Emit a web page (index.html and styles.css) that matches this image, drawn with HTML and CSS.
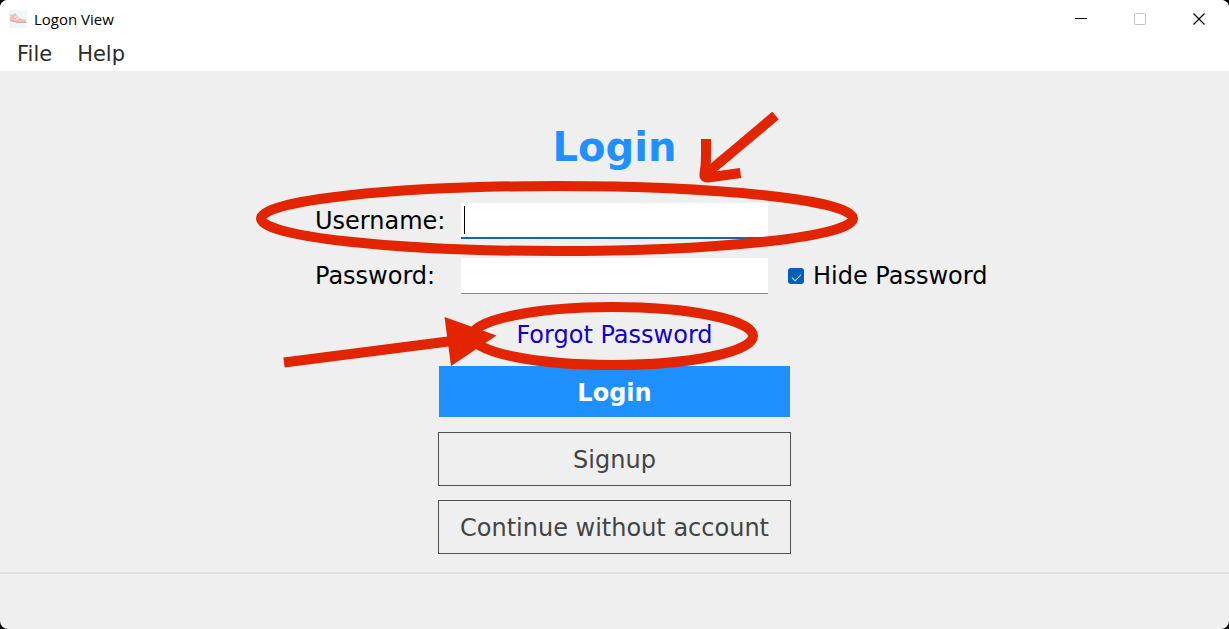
FILE: index.html
```html
<!DOCTYPE html>
<html lang="en">
<head>
<meta charset="utf-8">
<title>Logon View</title>
<link rel="stylesheet" href="styles.css">
</head>
<body>
<div class="window">
  <header class="titlebar">
    <svg class="app-icon" width="18" height="18" viewBox="0 0 18 18" aria-hidden="true">
      <rect width="18" height="18" fill="#eef8fa"/>
      <path d="M1.500 4 L3.500 5 L6 3 L9 6.500 L13 9 L17 10 V12.500 L11 13 L1 10.500Z" fill="#f0c0bb"/>
      <path d="M1 10.500 L8 12.300 L17 12.500" fill="none" stroke="#d9a09c" stroke-width="1"/>
      <path d="M5.500 7 L8 6 M7.500 9 L10.500 7.500" stroke="#fff" stroke-width=".8"/>
    </svg>
    <span class="caption">Logon View</span>
    <div class="controls">
      <button type="button" class="control" aria-label="Minimize">
        <svg width="12" height="12" viewBox="0 0 12 12"><path d="M0 5.500H12" stroke="#000"/></svg>
      </button>
      <button type="button" class="control" aria-label="Maximize" disabled>
        <svg width="12" height="12" viewBox="0 0 12 12"><rect x=".5" y=".5" width="11" height="11" rx="1" fill="none" stroke="#c4c4c4"/></svg>
      </button>
      <button type="button" class="control" aria-label="Close">
        <svg width="12" height="12" viewBox="0 0 12 12"><path d="M.5 .5L11.500 11.500M11.500 .5L.5 11.500" stroke="#000" stroke-width="1.200"/></svg>
      </button>
    </div>
  </header>
  <nav class="menubar">
    <button type="button" class="menu">File</button>
    <button type="button" class="menu">Help</button>
  </nav>
  <main class="content">
    <form class="login">
      <h1 class="title">Login</h1>
      <div class="fields">
        <label class="label" for="username">Username:</label>
        <div class="field focused"><span class="caret"></span><input class="input" id="username" type="text"></div>
        <span></span>
        <label class="label" for="password">Password:</label>
        <div class="field"><input class="input" id="password" type="password"></div>
        <label class="toggle" for="hide"><input class="check" id="hide" type="checkbox" checked>Hide Password</label>
      </div>
      <a class="forgot" href="#">Forgot Password</a>
      <div class="actions">
        <button type="submit" class="button primary">Login</button>
        <button type="button" class="button">Signup</button>
        <button type="button" class="button">Continue without account</button>
      </div>
      <svg class="marks" width="620" height="280" viewBox="250 100 620 280" fill="none" stroke="#e22400" stroke-width="10" aria-hidden="true">
        <ellipse cx="557" cy="218.500" rx="296" ry="32.500"/>
        <ellipse cx="612.500" cy="336" rx="140.500" ry="29"/>
        <path d="M775.500 115.500L706 174"/>
        <path d="M706 139V155Q706 166 704.500 174Q704 178 708 177.500L740.500 173"/>
        <path d="M284 362.500L452 341"/>
        <path d="M444.500 317L496.500 335.500L451 366Z" fill="#e22400" stroke="none"/>
      </svg>
    </form>
  </main>
  <footer class="statusbar"></footer>
</div>
</body>
</html>
```
FILE: styles.css
```css
* { box-sizing: border-box; }

body {
  margin: 0;
  background: #000;
  font-family: "DejaVu Sans", Verdana, sans-serif;
  color: #000;
}

button, input { font: inherit; color: inherit; }

.window {
  display: flex;
  flex-direction: column;
  min-height: 100vh;
  background: #efefef;
  border-radius: 8px;
  overflow: hidden;
}

.titlebar {
  display: flex;
  align-items: center;
  height: 37px;
  padding: 0 1px 0 9px;
  background: #fff;
}

.caption {
  margin-left: 7px;
  font-family: "Open Sans", "Noto Sans", sans-serif;
  font-size: 15px;
}

.controls {
  display: flex;
  height: 100%;
  margin-left: auto;
}

.control {
  display: grid;
  place-items: center;
  width: 59px;
  padding: 0;
  border: 0;
  background: none;
}

.menubar {
  display: flex;
  gap: 25px;
  height: 34px;
  padding-left: 17px;
  background: #fff;
}

.menu {
  padding: 0;
  border: 0;
  background: none;
  color: #2b2b2b;
  font-size: 21px;
}

.content {
  flex: 1;
  padding-top: 52px;
}

.login {
  position: relative;
  display: flex;
  flex-direction: column;
  align-items: center;
  font-size: 24px;
}

.title {
  margin: 0;
  color: #1e90ff;
  font-size: 40px;
  line-height: 48px;
}

.fields {
  display: grid;
  grid-template-columns: 1fr 307px 1fr;
  row-gap: 19px;
  align-items: center;
  width: 100%;
  margin-top: 32px;
}

.label {
  justify-self: end;
  width: 146px;
}

.field {
  position: relative;
  height: 36px;
  background: #fff;
  border-bottom: 1px solid #8c8c8c;
}

.focused { border-bottom: 2px solid #1466b0; }

.input {
  display: block;
  width: 100%;
  height: 100%;
  padding: 0 4px;
  border: 0;
  background: none;
  outline: none;
}

.caret {
  position: absolute;
  top: 3px;
  left: 3px;
  width: 1px;
  height: 28px;
  background: #000;
}

.toggle {
  display: flex;
  align-items: center;
  gap: 9px;
  margin-left: 20px;
  white-space: nowrap;
}

.check {
  display: grid;
  place-items: center;
  width: 16px;
  height: 16px;
  margin: 0;
  appearance: none;
  border-radius: 3px;
  background: #005fb8;
}

.check:checked::before {
  content: "";
  width: 8px;
  height: 4px;
  border: solid #cfe3f5;
  border-width: 0 0 1px 1px;
  transform: rotate(-45deg);
}

.forgot {
  margin-top: 27px;
  color: #1200d0;
  line-height: 28px;
  text-decoration: none;
}

.actions {
  display: flex;
  flex-direction: column;
  align-items: center;
  gap: 14px;
  width: 353px;
  margin-top: 17px;
}

.button {
  width: 100%;
  height: 54px;
  padding: 2px 0 0;
  border: 1px solid #505050;
  background: none;
  color: #444;
}

.primary {
  width: 351px;
  height: 51px;
  margin-bottom: 1px;
  border: 0;
  background: #1e90ff;
  color: #fff;
  font-weight: bold;
}

.marks {
  position: absolute;
  top: -23px;
  left: 50%;
  margin-left: -365px;
  pointer-events: none;
}

.statusbar {
  height: 57px;
  border-top: 2px solid #dedede;
}
```
